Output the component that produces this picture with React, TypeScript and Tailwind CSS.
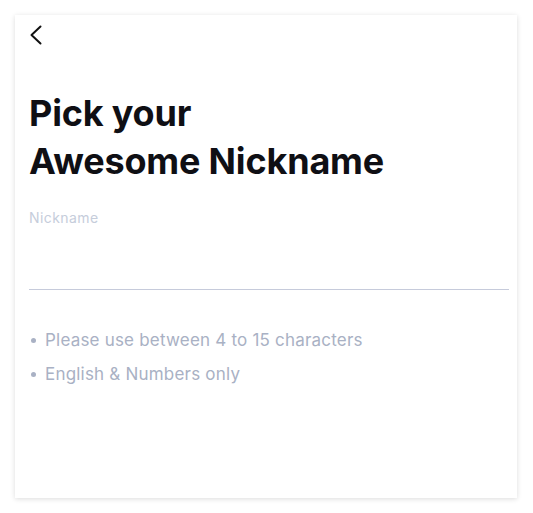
export default function App() {
  const rules = ["Please use between 4 to 15 characters", "English & Numbers only"];

  return (
    <div className="min-h-[513px] w-full bg-white px-[15px] pt-[15px] pb-[15px] font-['Inter',sans-serif]">
      <div className="h-[483px] w-[502px] bg-white shadow-[0_1px_5px_rgba(0,0,0,0.14)] pl-[14px] pr-[8px] pt-[10px]">
        {/* back */}
        <button className="block h-[20px] w-[14px]">
          <svg width="14" height="20" viewBox="0 0 14 20" fill="none">
            <path d="M11.5 1.5 L2.5 10 L11.5 18.5" stroke="#111" strokeWidth="2" strokeLinecap="round" strokeLinejoin="round" />
          </svg>
        </button>

        <h1 className="mt-[44px] text-[36px] leading-[48px] font-bold text-[#0f0f14] tracking-[-0.005em]">
          Pick your
          <br />
          Awesome Nickname
        </h1>

        <div className="mt-[23px] text-[14px] leading-[20px] tracking-[0.03em] text-[#c6cddb]">Nickname</div>
        <div className="mt-[61px] h-px bg-[#c6cbdb]" />

        <ul className="mt-[39px] flex flex-col gap-[12px] text-[17px] leading-[22px] tracking-[0.012em] text-[#a9b1c4]">
          {rules.map((r) => (
            <li key={r} className="flex items-center gap-[9px]">
              <span className="h-[5px] w-[5px] rounded-full bg-[#a9b1c4] ml-[2px]" />
              {r}
            </li>
          ))}
        </ul>
      </div>
    </div>
  );
}
